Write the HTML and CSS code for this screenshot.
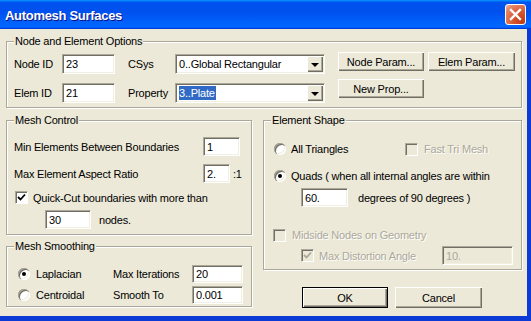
FILE: index.html
```html
<!DOCTYPE html>
<html lang="en">
<head>
    <meta charset="UTF-8">
    <title>Automesh Surfaces</title>
    <link rel="stylesheet" href="styles.css">
</head>
<body>

<div class="window">
    <div class="titlebar">
        <span class="title">Automesh Surfaces</span>
        <span class="close">
            <svg width="13" height="13" viewBox="0 0 13 13"><path d="M2 2 L11 11 M11 2 L2 11" stroke="#fff" stroke-width="2.4" stroke-linecap="square"/></svg>
        </span>
    </div>

    <div class="client">
        <!-- Node and element options -->
        <fieldset class="group group-ids">
            <legend>Node and Element Options</legend>
            <div class="ids-wrap">
                <div class="ids">
                    <span>Node ID</span>
                    <div class="edit w53">23</div>
                    <span>CSys</span>
                    <div class="combo"><span>0..Global Rectangular</span><span class="drop"><i class="arrow"></i></span></div>
                    <span>Elem ID</span>
                    <div class="edit w53">21</div>
                    <span>Property</span>
                    <div class="combo"><span class="selected">3..Plate</span><span class="drop"><i class="arrow"></i></span></div>
                </div>
                <div class="param-buttons">
                    <button class="btn">Node Param...</button>
                    <button class="btn">Elem Param...</button>
                    <button class="btn">New Prop...</button>
                </div>
            </div>
        </fieldset>

        <div class="col-left">
            <fieldset class="group group-control">
                <legend>Mesh Control</legend>
                <div class="row h19">
                    <span class="lbl189">Min Elements Between Boundaries</span>
                    <div class="edit w37 h19">1</div>
                </div>
                <div class="row h19 mt8">
                    <span class="lbl189">Max Element Aspect Ratio</span>
                    <div class="edit w27 h19">2.</div>
                    <span class="ratio">:1</span>
                </div>
                <div class="row h13 mt8">
                    <span class="check ml1"><svg width="9" height="9" viewBox="0 0 9 9"><path d="M1 4 L3.5 6.5 L8 1.5" stroke="#000" stroke-width="1.8" fill="none"/></svg></span>
                    <span class="ml5">Quick-Cut boundaries with more than</span>
                </div>
                <div class="row h19 mt6">
                    <div class="edit w46 h19 ml31">30</div>
                    <span class="ml8">nodes.</span>
                </div>
            </fieldset>

            <fieldset class="group group-smoothing">
                <legend>Mesh Smoothing</legend>
                <div class="smoothing">
                    <div class="row"><span class="radio"><i class="dot"></i></span><span class="ml6">Laplacian</span></div>
                    <span>Max Iterations</span>
                    <div class="edit w51 h18">20</div>
                    <div class="row"><span class="radio"></span><span class="ml6">Centroidal</span></div>
                    <span>Smooth To</span>
                    <div class="edit w51 h18">0.001</div>
                </div>
            </fieldset>
        </div>

        <div class="col-right">
            <fieldset class="group group-shape">
                <legend>Element Shape</legend>
                <div class="row h14 shape-first">
                    <span class="row tri-item"><span class="radio"></span><span class="ml5">All Triangles</span></span>
                    <span class="check disabled"></span>
                    <span class="ml6 dim">Fast Tri Mesh</span>
                </div>
                <div class="row h14 mt13">
                    <span class="radio ml3"><i class="dot"></i></span>
                    <span class="ml5">Quads ( when all internal angles are within</span>
                </div>
                <div class="row h19 mt5">
                    <div class="edit w47 h19 ml30">60.</div>
                    <span class="ml10">degrees of 90 degrees )</span>
                </div>
                <div class="row h14 mt21">
                    <span class="check disabled ml2"></span>
                    <span class="ml6 dim">Midside Nodes on Geometry</span>
                </div>
                <div class="row h19 mt4">
                    <span class="check disabled ml30"><svg width="9" height="9" viewBox="0 0 9 9"><path d="M1 4 L3.5 6.5 L8 1.5" stroke="#aca899" stroke-width="1.8" fill="none"/></svg></span>
                    <span class="ml5 dim lbl123">Max Distortion Angle</span>
                    <div class="edit disabled-edit w71 h19">10.</div>
                </div>
            </fieldset>
            <div class="dialog-buttons">
                <button class="btn btn-default">OK</button>
                <button class="btn">Cancel</button>
            </div>
        </div>
    </div>
</div>

</body>
</html>
```

FILE: styles.css
```css
body { margin: 0; font-family: "Liberation Sans", Arial, sans-serif; font-size: 11px; letter-spacing: -0.2px; line-height: 14px; color: #000; background: #ece9d8; }
.window { width: 531px; height: 321px; display: flex; flex-direction: column; overflow: hidden; }

/* Title bar */
.titlebar { height: 29px; flex: none; box-sizing: border-box; display: flex; align-items: center; justify-content: space-between; padding: 0 5px; background: linear-gradient(180deg, #0997ff, #0053ee 8%, #0050ee 40%, #0066ff 88%, #0066ff 93%, #005bff 95%, #003dd7 96%, #003dd7); }
.title { color: #fff; font-weight: bold; font-size: 13px; letter-spacing: -0.3px; padding-top: 3px; text-shadow: 1px 1px #0f1089; }
.close { width: 21px; height: 21px; box-sizing: border-box; border: 1px solid #fff; border-radius: 3px; display: flex; align-items: center; justify-content: center; background: radial-gradient(circle at 85% 85%, #c23a12, #d95b34 45%, #e5876a 80%, #f0b8a5); }

/* Client area */
.client { flex: 1; background: #ece9d8; border-right: 4px solid #0b3ad6; border-bottom: 5px solid #0b3ad6; display: grid; grid-template-columns: 246px 259px; column-gap: 11px; row-gap: 5px; padding: 5px 0 0 6px; align-content: start; }

.group { margin: 0; padding: 0 7px 4px 7px; border: 1px solid #aca899; box-shadow: inset 1px 1px 0 #fff, 1px 1px 0 #fff; min-width: 0; }
.group legend { padding: 0 1px; line-height: 14px; background: #ece9d8; }

.group-ids { grid-column: 1 / 3; padding-top: 6px; padding-bottom: 4px; }
.ids-wrap { display: flex; align-items: flex-start; }
.ids { display: grid; grid-template-columns: 48px 66px 47px 150px; grid-auto-rows: 20px; row-gap: 9px; align-items: center; }
.param-buttons { display: grid; grid-template-columns: 86px 87px; grid-auto-rows: 19px; column-gap: 4px; row-gap: 8px; margin: -2px 0 0 13px; }

/* Controls */
.edit { height: 20px; box-sizing: border-box; background: #fff; border: 1px solid; border-color: #aca899 #fff #fff #aca899; box-shadow: inset 1px 1px 0 #716f64, inset -1px -1px 0 #f1efe2; padding: 0 2px 0 3px; display: flex; align-items: center; }
.disabled-edit { background: #ece9d8; color: #aca899; }
.combo { width: 150px; height: 20px; box-sizing: border-box; background: #fff; border: 1px solid; border-color: #aca899 #fff #fff #aca899; box-shadow: inset 1px 1px 0 #716f64, inset -1px -1px 0 #f1efe2; display: flex; align-items: center; padding: 0 1px 0 3px; }
.selected { background: #316ac5; color: #fff; padding-right: 1px; }
.drop { margin-left: auto; width: 16px; height: 16px; box-sizing: border-box; background: #ece9d8; box-shadow: inset 1px 1px 0 #fff, inset -1px -1px 0 #716f64, inset -2px -2px 0 #aca899; display: flex; align-items: center; justify-content: center; }
.arrow { width: 0; height: 0; border-left: 4px solid transparent; border-right: 4px solid transparent; border-top: 4px solid #000; margin-top: 1px; }

.btn { font: inherit; letter-spacing: inherit; color: #000; background: #ece9d8; border: none; padding: 0; box-shadow: inset 1px 1px 0 #fff, inset -1px -1px 0 #716f64, inset -2px -2px 0 #aca899; }
.btn-default { border: 1px solid #000; }

.radio { width: 12px; height: 12px; flex: none; border-radius: 50%; background: #fff; box-shadow: inset 1px 1px 0 #aca899, inset 2px 2px 0 #716f64, inset -1px -1px 0 #fff, inset -2px -2px 0 #f1efe2; display: flex; align-items: center; justify-content: center; }
.dot { width: 4px; height: 4px; border-radius: 50%; background: #000; }
.check { width: 13px; height: 13px; flex: none; box-sizing: border-box; background: #fff; border: 1px solid; border-color: #aca899 #fff #fff #aca899; box-shadow: inset 1px 1px 0 #716f64; display: flex; align-items: center; justify-content: center; }
.check.disabled { background: #ece9d8; }
.dim { color: #aca899; text-shadow: 1px 1px 0 #fff; }

/* Rows */
.row { display: flex; align-items: center; }
.h13 { height: 13px; } .h14 { height: 14px; } .h18 { height: 18px; } .h19 { height: 19px; }
.w27 { width: 27px; } .w37 { width: 37px; } .w46 { width: 46px; } .w47 { width: 47px; } .w51 { width: 51px; } .w53 { width: 53px; } .w71 { width: 71px; }
.mt4 { margin-top: 4px; } .mt5 { margin-top: 5px; } .mt6 { margin-top: 6px; } .mt8 { margin-top: 8px; } .mt13 { margin-top: 13px; } .mt21 { margin-top: 21px; }
.ml1 { margin-left: 1px; } .ml2 { margin-left: 2px; } .ml3 { margin-left: 3px; } .ml5 { margin-left: 5px; } .ml6 { margin-left: 6px; } .ml8 { margin-left: 8px; } .ml10 { margin-left: 10px; } .ml30 { margin-left: 30px; } .ml31 { margin-left: 31px; }
.lbl189 { width: 189px; flex: none; }
.lbl123 { width: 123px; flex: none; }
.ratio { margin-left: 3px; }

.col-left { display: flex; flex-direction: column; gap: 4px; }
.group-control { padding-top: 10px; padding-bottom: 5px; }
.group-smoothing { padding-top: 12px; padding-bottom: 2px; }
.smoothing { display: grid; grid-template-columns: 95px 79px 51px; grid-auto-rows: 18px; row-gap: 3px; align-items: center; margin-left: 4px; }

.group-shape { padding-bottom: 4px; }
.shape-first { margin-top: 15px; }
.tri-item { width: 131px; margin-left: 3px; flex: none; }

.dialog-buttons { display: flex; gap: 7px; margin: 17px 0 0 39px; }
.dialog-buttons .btn { width: 86px; height: 21px; }
.dialog-buttons .btn + .btn { width: 87px; }
```
